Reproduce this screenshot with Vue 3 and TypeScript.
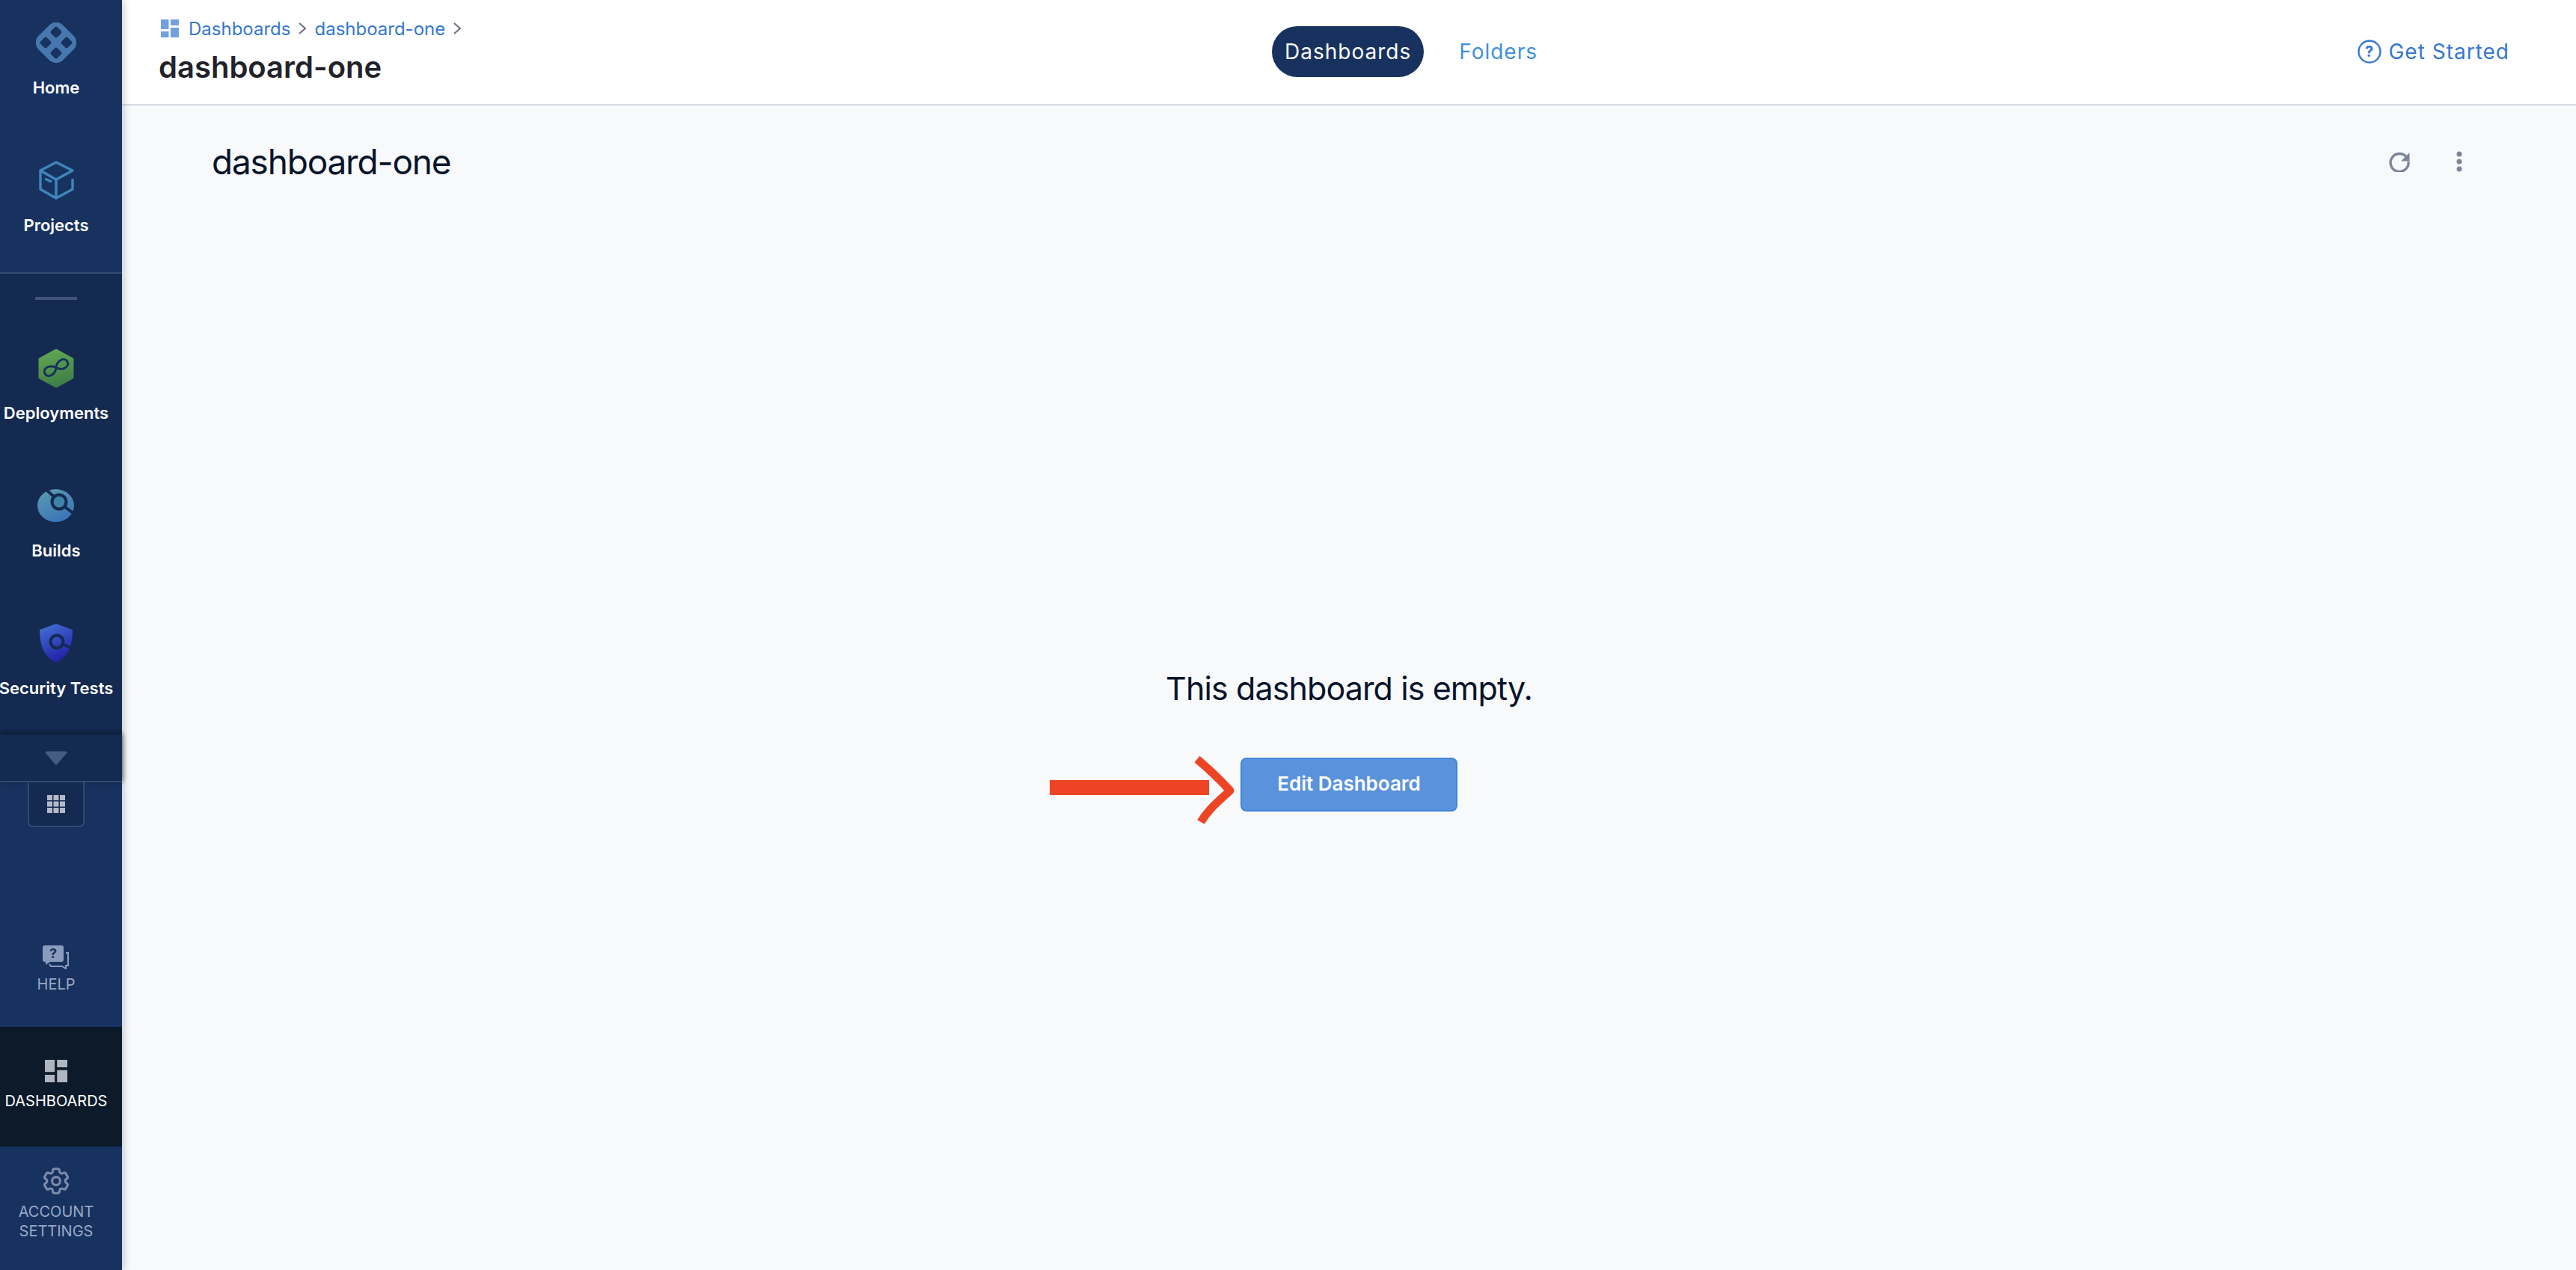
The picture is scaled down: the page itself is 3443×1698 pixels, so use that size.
<template>
  <div class="page">
    <aside class="sidebar">
      <section class="top-nav">
        <a class="nav-item home">
          <svg class="icon" width="60" height="60" viewBox="0 0 60 60">
            <rect x="7" y="7" width="46" height="46" rx="13" transform="rotate(45 30 30)" fill="#4778ad" />
            <rect x="24" y="10" width="12" height="12" rx="3" transform="rotate(45 30 16)" fill="#183260" />
            <rect x="10" y="24" width="12" height="12" rx="3" transform="rotate(45 16 30)" fill="#183260" />
            <rect x="38" y="24" width="12" height="12" rx="3" transform="rotate(45 44 30)" fill="#183260" />
            <rect x="24" y="38" width="12" height="12" rx="3" transform="rotate(45 30 44)" fill="#183260" />
          </svg>
          <span>Home</span>
        </a>
        <a class="nav-item">
          <svg class="icon" width="60" height="60" viewBox="-6 -4 60 60" fill="none" stroke="#3f86bb" stroke-width="3.4" stroke-linejoin="round">
            <path d="M24 2 46 13 24 25 3 13Z" />
            <path d="M3 13V38L24 50 46 38V24" />
            <path d="M24 25V50" />
            <path d="M9 24 18 28" />
          </svg>
          <span>Projects</span>
        </a>
      </section>

      <section class="modules">
        <div class="dash"></div>
        <a class="nav-item">
          <svg class="icon" width="60" height="60" viewBox="-6 -4 60 60">
            <defs>
              <linearGradient id="deployFill" x1="0.4" y1="0" x2="0.6" y2="1">
                <stop offset="0" stop-color="#60a653" />
                <stop offset="1" stop-color="#3e7c48" />
              </linearGradient>
            </defs>
            <path d="M24 2 46 14V39L24 51 2 39V14Z" fill="url(#deployFill)" stroke="url(#deployFill)" stroke-width="3" stroke-linejoin="round" />
            <path transform="translate(24 25.5) rotate(-28) scale(.85)" d="M0 0C-4-6-8-7-12-7-17-7-20-4-20 0-20 4-17 7-12 7-8 7-4 6 0 0 4-6 8-7 12-7 17-7 20-4 20 0 20 4 17 7 12 7 8 7 4 6 0 0Z" fill="none" stroke="#15305a" stroke-width="3.4" />
          </svg>
          <span>Deployments</span>
        </a>
        <a class="nav-item">
          <svg class="icon" width="60" height="60" viewBox="-5 -5 60 60">
            <defs>
              <linearGradient id="buildFill" x1="0.2" y1="0" x2="0.7" y2="1">
                <stop offset="0" stop-color="#5a9ab0" />
                <stop offset="1" stop-color="#3a72b9" />
              </linearGradient>
            </defs>
            <ellipse cx="24.5" cy="25" rx="24.5" ry="22" fill="url(#buildFill)" />
            <path d="M12 4 22 13M37 27 49 36" stroke="#142a50" stroke-width="4" />
            <circle cx="29" cy="20" r="9.5" fill="#3f83a8" stroke="#142a50" stroke-width="4" />
          </svg>
          <span>Builds</span>
        </a>
        <a class="nav-item">
          <svg class="icon" width="60" height="60" viewBox="-8 -4 60 60">
            <defs>
              <linearGradient id="secFill" x1="0.2" y1="0" x2="0.6" y2="1">
                <stop offset="0" stop-color="#416fd2" />
                <stop offset="1" stop-color="#221da6" />
              </linearGradient>
            </defs>
            <path d="M22 0 44 8C44 30 38 44 22 52 6 44 0 30 0 8Z" fill="url(#secFill)" />
            <path d="M30 27 44 33" stroke="#142a50" stroke-width="3.5" />
            <circle cx="23" cy="24" r="8.5" fill="none" stroke="#142a50" stroke-width="4" />
          </svg>
          <span>Security Tests</span>
        </a>
      </section>

      <div class="more-bar">
        <svg width="30" height="19" viewBox="0 0 30 19"><path d="M2 2H28L15 17Z" fill="#465c80" stroke="#465c80" stroke-width="3" stroke-linejoin="round" /></svg>
      </div>
      <button class="grid-btn">
        <svg width="24" height="24" viewBox="0 0 24 24" fill="#b4b8c8">
          <template v-for="row in 3" :key="row">
            <rect v-for="col in 3" :key="col" :x="(col - 1) * 8.5" :y="(row - 1) * 8.5" width="7" height="7" />
          </template>
        </svg>
      </button>

      <div class="bottom-nav">
        <a class="foot-item help">
          <svg width="36" height="32" viewBox="0 0 36 32">
            <path d="M3 0H25Q28 0 28 3V19Q28 22 25 22H10L4 26V22H3Q0 22 0 19V3Q0 0 3 0Z" fill="#8b9bbd" />
            <text x="14" y="17" text-anchor="middle" class="help-mark">?</text>
            <path d="M31 10H34V27H31V31L26 28H11L9 25" fill="none" stroke="#8b9bbd" stroke-width="2" />
          </svg>
          <span>HELP</span>
        </a>
        <a class="foot-item active">
          <svg width="30" height="30" viewBox="0 0 24 24" fill="#b0b5bf">
            <rect x="0" y="0" width="10.5" height="13" />
            <rect x="13" y="0" width="11" height="8" />
            <rect x="0" y="16" width="10.5" height="8" />
            <rect x="13" y="11" width="11" height="13" />
          </svg>
          <span>DASHBOARDS</span>
        </a>
        <a class="foot-item settings">
          <svg width="36" height="36" viewBox="2 2 20 20" fill="none" stroke="#7d8ba8" stroke-width="1.7">
            <path d="M9.594 3.94c.09-.542.56-.94 1.11-.94h2.593c.55 0 1.02.398 1.11.94l.213 1.281c.063.374.313.686.645.87.074.04.147.083.22.127.325.196.72.257 1.075.124l1.217-.456a1.125 1.125 0 0 1 1.37.49l1.296 2.247a1.125 1.125 0 0 1-.26 1.431l-1.003.827c-.293.241-.438.613-.43.992a7.723 7.723 0 0 1 0 .255c-.008.378.137.75.43.991l1.004.827c.424.35.534.955.26 1.43l-1.298 2.247a1.125 1.125 0 0 1-1.369.491l-1.217-.456c-.355-.133-.75-.072-1.076.124a6.47 6.47 0 0 1-.22.128c-.331.183-.581.495-.644.869l-.213 1.281c-.09.543-.56.94-1.11.94h-2.594c-.55 0-1.019-.398-1.11-.94l-.213-1.281c-.062-.374-.312-.686-.644-.87a6.52 6.52 0 0 1-.22-.127c-.325-.196-.72-.257-1.076-.124l-1.217.456a1.125 1.125 0 0 1-1.369-.49l-1.297-2.247a1.125 1.125 0 0 1 .26-1.431l1.004-.827c.292-.24.437-.613.43-.991a6.932 6.932 0 0 1 0-.255c.007-.38-.138-.751-.43-.992l-1.004-.827a1.125 1.125 0 0 1-.26-1.43l1.297-2.247a1.125 1.125 0 0 1 1.37-.491l1.216.456c.356.133.751.072 1.076-.124.072-.044.146-.086.22-.128.332-.183.582-.495.644-.869l.214-1.28Z" />
            <circle cx="12" cy="12" r="3" />
          </svg>
          <span>ACCOUNT SETTINGS</span>
        </a>
      </div>
    </aside>

    <main class="main">
      <header class="topbar">
        <div class="crumbs-col">
          <div class="crumbs">
            <svg width="24" height="24" viewBox="0 0 24 24" fill="#72a0e0">
              <rect x="0" y="0" width="10.5" height="13" />
              <rect x="13" y="0" width="11" height="8" />
              <rect x="0" y="16" width="10.5" height="8" />
              <rect x="13" y="11" width="11" height="13" />
            </svg>
            <a v-for="crumb in crumbs" :key="crumb" class="crumb">
              {{ crumb }}
              <svg width="10" height="20" viewBox="0 0 10 20"><path d="M1 3 9 10 1 17" fill="none" stroke="#6b6d85" stroke-width="2" /></svg>
            </a>
          </div>
          <h1 class="page-title">dashboard-one</h1>
        </div>
        <nav class="tabs">
          <a class="tab selected">Dashboards</a>
          <a class="tab">Folders</a>
        </nav>
        <a class="get-started">
          <svg width="32" height="32" viewBox="0 0 32 32">
            <circle cx="16" cy="16" r="14.5" fill="none" stroke="#3577d0" stroke-width="2.4" />
            <text x="16" y="23" text-anchor="middle" class="gs-mark">?</text>
          </svg>
          Get Started
        </a>
      </header>

      <div class="title-row">
        <h2 class="dash-title">dashboard-one</h2>
        <div class="actions">
          <svg width="28" height="28" viewBox="0 0 28 28">
            <path d="M23.5 8A12 12 0 1 0 26 14" fill="none" stroke="#7d8599" stroke-width="3.4" />
            <path d="M27.5 2V13.5H16Z" fill="#7d8599" />
          </svg>
          <svg width="8" height="28" viewBox="0 0 8 28" fill="#7d8599">
            <circle cx="4" cy="4" r="3.5" />
            <circle cx="4" cy="14" r="3.5" />
            <circle cx="4" cy="24" r="3.5" />
          </svg>
        </div>
      </div>

      <div class="empty">
        <p class="empty-text">This dashboard is empty.</p>
        <button class="edit-btn">
          Edit Dashboard
          <svg class="pointer" width="252" height="92" viewBox="0 0 252 92">
            <rect x="0" y="33" width="213" height="20" fill="#ee4426" />
            <path d="M197 5C215 20 228 33 241 47 225 62 212 72 202 89" fill="none" stroke="#ee4426" stroke-width="11" stroke-linejoin="round" />
          </svg>
        </button>
      </div>
    </main>
  </div>
</template>

<script setup lang="ts">
const crumbs: string[] = ['Dashboards', 'dashboard-one']
</script>

<style>
html,
body {
  margin: 0;
  background: #f8f9fb;
}
</style>

<style scoped>
.page {
  display: flex;
  width: 3443px;
  height: 1698px;
  overflow: hidden;
  font-family: Inter, "Liberation Sans", sans-serif;
}

.sidebar {
  position: relative;
  z-index: 2;
  flex: 0 0 163px;
  min-width: 0;
  display: flex;
  flex-direction: column;
  background: #183260;
  box-shadow: 2px 0 10px rgba(0, 0, 0, 0.22);
}

.top-nav {
  height: 366px;
  padding-top: 27px;
  box-sizing: border-box;
  border-bottom: 2px solid #33496f;
  display: flex;
  flex-direction: column;
  gap: 80px;
}

.nav-item {
  display: flex;
  flex-direction: column;
  align-items: center;
  gap: 16px;
  width: 150px;
  color: #fff;
  font-size: 22px;
  font-weight: 600;
  line-height: 28px;
  white-space: nowrap;
}

.icon {
  display: block;
}

.modules {
  height: 616px;
  padding-top: 31px;
  box-sizing: border-box;
  background: #142a50;
  display: flex;
  flex-direction: column;
  gap: 80px;
}

.dash {
  width: 56px;
  height: 4px;
  margin: 0 0 -19px 47px;
  background: #3f5478;
}

.more-bar {
  height: 64px;
  box-sizing: border-box;
  padding-right: 13px;
  border-bottom: 2px solid #33496f;
  background: #142a50;
  display: flex;
  align-items: center;
  justify-content: center;
  box-shadow: 0 -3px 6px rgba(0, 0, 0, 0.3), 2px 0 6px rgba(0, 0, 0, 0.3);
}

.grid-btn {
  width: 76px;
  height: 60px;
  margin: 0 0 0 37px;
  padding: 0;
  box-sizing: border-box;
  background: #142a50;
  border: 2px solid #2f4a78;
  border-top: 0;
  border-radius: 0 0 7px 7px;
  display: flex;
  align-items: center;
  justify-content: center;
}

.bottom-nav {
  margin-top: auto;
  display: flex;
  flex-direction: column;
}

.foot-item {
  display: flex;
  flex-direction: column;
  align-items: center;
  gap: 10px;
  box-sizing: border-box;
  padding-right: 13px;
  color: #9aa8c3;
  font-size: 20px;
  line-height: 26px;
  text-align: center;
}

.help {
  gap: 7px;
  height: 109px;
}

.active {
  gap: 12px;
  height: 160px;
  padding-top: 44px;
  background: #0c1a2a;
  color: #fff;
}

.settings {
  height: 165px;
  padding: 28px 28px 0 15px;
}

.help-mark {
  font-size: 18px;
  font-weight: 700;
  fill: #183260;
}

.main {
  flex: 1;
  min-width: 0;
  display: flex;
  flex-direction: column;
  background: #f8f9fb;
}

.topbar {
  height: 141px;
  box-sizing: border-box;
  padding: 0 89px 0 49px;
  background: #fff;
  border-bottom: 2px solid #d9dae5;
  display: grid;
  grid-template-columns: 1488px auto 1fr;
  align-items: center;
}

.crumbs-col {
  align-self: start;
  padding-top: 26px;
}

.crumbs {
  display: flex;
  align-items: center;
  gap: 13px;
  margin-left: 3px;
  height: 24px;
}

.crumb {
  display: flex;
  align-items: center;
  gap: 11px;
  margin-right: -2px;
  color: #3577d0;
  font-size: 24px;
}

.page-title {
  margin: 14px 0 0;
  font-size: 40px;
  line-height: 52px;
  font-weight: 600;
  color: #22222a;
}

.tabs {
  display: flex;
  align-items: center;
  gap: 47px;
  margin-top: -2px;
}

.tab {
  color: #3f8fe0;
  font-size: 28px;
  letter-spacing: 1px;
  line-height: 68px;
}

.selected {
  padding: 0 17px;
  border-radius: 34px;
  background: #183260;
  color: #fff;
}

.get-started {
  justify-self: end;
  display: flex;
  align-items: center;
  gap: 9px;
  color: #3577d0;
  font-size: 28px;
  letter-spacing: 1px;
  margin-top: -2px;
}

.gs-mark {
  font-size: 20px;
  font-weight: 700;
  fill: #3577d0;
}

.title-row {
  display: flex;
  align-items: center;
  justify-content: space-between;
  padding: 47px 152px 0 120px;
}

.dash-title {
  margin: 0;
  font-size: 46px;
  letter-spacing: -1.2px;
  line-height: 56px;
  font-weight: 400;
  color: #07142b;
}

.actions {
  display: flex;
  align-items: center;
  gap: 62px;
}

.empty {
  display: flex;
  flex-direction: column;
  align-items: center;
  padding-top: 648px;
}

.empty-text {
  margin: 0 0 65px;
  font-size: 43px;
  letter-spacing: -0.9px;
  line-height: 56px;
  color: #07142b;
}

.edit-btn {
  position: relative;
  width: 290px;
  height: 72px;
  padding: 0 0 3px;
  background: #5a93db;
  border: 2px solid #4085d8;
  border-radius: 8px;
  color: #fff;
  font-family: inherit;
  font-size: 26px;
  font-weight: 600;
}

.pointer {
  position: absolute;
  left: -257px;
  top: -5px;
}
</style>
